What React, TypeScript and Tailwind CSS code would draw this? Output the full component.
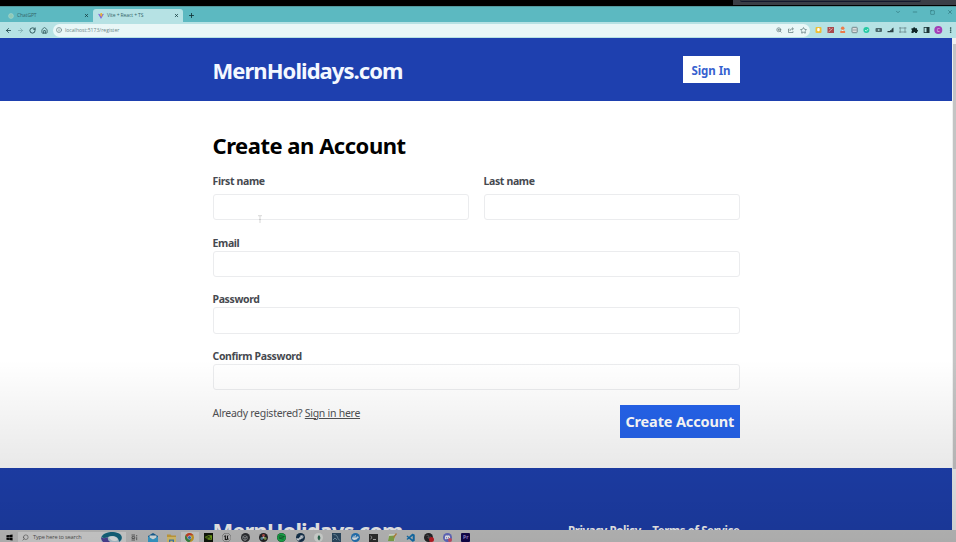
import type { ReactNode } from "react";
import { ArrowLeft, ArrowRight, RotateCw, House, Info, Plus, X, ZoomIn, Star, ChevronDown, Minus, Square, Search, EllipsisVertical } from "lucide-react";
import { FaWindows, FaSteamSymbol, FaSpotify, FaDocker, FaDiscord } from "react-icons/fa";
import { SiNvidia, SiUnrealengine, SiUnity, SiMongodb } from "react-icons/si";
import { VscVscode } from "react-icons/vsc";

function Tab({ icon, title, active }: { icon: ReactNode; title: string; active?: boolean }) {
  return (
    <div className={`flex h-[13px] items-center pr-[4px] ${active ? "w-[90px] rounded-t-[3px] bg-[#b6e2e4] pl-[5px]" : "w-[93px] pl-[8px]"}`}>
      {icon}
      <span className="ml-[3px] flex-1 text-[5px] leading-none tracking-[-0.1px] text-[#34666a]">{title}</span>
      <X size={5} strokeWidth={3.5} className="text-[#12383b]" />
    </div>
  );
}

function BrowserChrome() {
  return (
    <div className="shrink-0 font-['Open_Sans','Noto_Sans',sans-serif]">
      <div className="flex h-[16px] items-end border-t border-[#53989d] bg-[#5cb9c1]">
        <Tab
          title="ChatGPT"
          icon={
            <svg width="6" height="6" viewBox="0 0 6 6"><circle cx="3" cy="3" r="2.4" fill="#8fc9b4" stroke="#a4d6cd" strokeWidth=".7" /></svg>
          }
        />
        <Tab
          active
          title="Vite + React + TS"
          icon={
            <svg width="6" height="6" viewBox="0 0 6 6"><path d="M0 .8 3 6 6 .8 3 1.4Z" fill="#8468d8" /><path d="m2.5 0 1.8-.2-.5 1.7.9-.1L3 4.4l.1-1.700-1 .2Z" fill="#e9b338" /></svg>
          }
        />
        <Plus size={7} strokeWidth={3} className="mb-[3px] ml-[5px] text-[#12383b]" />
        <div className="mb-[7px] ml-auto flex items-center text-[#215c62]">
          <ChevronDown size={6} />
          <Minus size={6} className="ml-[11px]" />
          <Square size={5} className="ml-[12px]" />
          <X size={6} className="ml-[12px] mr-[3px]" />
        </div>
      </div>
      <div className="flex h-[16px] items-center bg-[#b6e2e4] pl-[5px] text-[#244c50]">
        <ArrowLeft size={7} strokeWidth={3} />
        <ArrowRight size={7} strokeWidth={2.5} className="ml-[5px] text-[#7ba8ab]" />
        <RotateCw size={7} strokeWidth={3} className="ml-[5px]" />
        <House size={7} strokeWidth={2.5} className="ml-[5px]" />
        <div className="ml-[5px] flex h-[13px] w-[757px] items-center rounded-full bg-[#e9f7f7] pl-[3px] pr-[3px]">
          <Info size={6} strokeWidth={2.5} className="text-[#5f7678]" />
          <span className="ml-[3px] pt-[1px] text-[5.1px] leading-none text-[#6c8688]">localhost:5173/register</span>
          <div className="ml-auto flex items-center gap-[6px] text-[#5b7476]">
            <ZoomIn size={6} strokeWidth={2.5} />
            <svg width="6" height="6" viewBox="0 0 6 6" fill="none" stroke="currentColor" strokeWidth=".7"><path d="M1.500 2H.5v3.500h4.500V4.300M2 4C2 2.500 3 1.800 5 1.800M4 .5l1.500 1.300L4 3.200" /></svg>
            <Star size={7} strokeWidth={2.5} />
          </div>
        </div>
        <svg className="ml-[4px]" width="141" height="12" viewBox="814 0 141 12">
          <rect x="815.5" y="3" width="6" height="6" rx="1" fill="#eebf36" /><rect x="817.2" y="4" width="2.5" height="3.2" rx="1" fill="#fff" />
          <rect x="827.5" y="3" width="6.500" height="6" fill="#a9494c" /><path d="m828.5 8 4-3.500M829 4l1.500 1" stroke="#f3d9d9" strokeWidth=".7" />
          <circle cx="842.7" cy="4.3" r="1.8" fill="#ed7b4a" /><path d="M840.3 9V6.800h4.800V9Z" fill="#ed7b4a" /><circle cx="842.7" cy="6.3" r=".6" fill="#fff" />
          <rect x="852" y="3.3" width="5.2" height="5.4" rx=".7" fill="#ddd" stroke="#73888d" /><path d="M853 6h3.500" stroke="#73888d" strokeWidth=".7" />
          <circle cx="866.4" cy="6" r="3" fill="#26c9a4" /><path d="m865 6 1.200 1.200 2-2.300" fill="none" stroke="#d4fff1" strokeWidth=".8" />
          <rect x="875.5" y="4" width="6.500" height="4" rx="1" fill="#4b686c" /><circle cx="878.7" cy="6" r="1" fill="#9fc9cc" />
          <path d="M887.500 8.300h6V3.500l-2 1.500v1.200h-1.500v.8h-2.500Z" fill="#283f43" />
          <path d="M900.200 3.200v5.600M905 3.200v5.600M899 4h7.500M899 8h7.500" fill="none" stroke="#638084" strokeWidth=".7" />
          <path d="M911.500 4.200h1.700a1 1 0 0 1 2 0h1.800v1.600a1 1 0 0 1 0 2V9h-1.800a.9.900 0 0 0-1.800 0h-1.900V7.400a.9.900 0 0 0 0-1.600Z" fill="#102629" />
          <rect x="924.1" y="3.4" width="4.8" height="5.2" fill="none" stroke="#1c3437" strokeWidth=".8" /><path d="M926.500 3h2.800v6h-2.800Z" fill="#1c3437" />
          <circle cx="938.3" cy="6" r="4" fill="#a23fb6" />
          <text x="938.3" y="7.800" textAnchor="middle" fontSize="5" fill="#f4dff6">C</text>
          <g transform="translate(947 2.600)"><EllipsisVertical size={7} strokeWidth={3} color="#24494c" /></g>
        </svg>
      </div>
    </div>
  );
}

function Field({ label, split }: { label: string; split?: boolean }) {
  return (
    <label className="flex flex-1 flex-col text-[10.5px] font-bold leading-[15px] tracking-[-0.36px] text-[#46494f]">
      <span className={split ? "mb-[5px]" : ""}>{label}</span>
      <input className="h-[26.5px] w-full rounded-[3px] border border-[#ebecee] bg-white/40 px-2 font-normal outline-none" />
    </label>
  );
}

function TaskIcon({ children }: { children: ReactNode }) {
  return <div className="flex h-[12px] w-[18.4px] shrink-0 items-center justify-center">{children}</div>;
}

function Taskbar() {
  return (
    <div className="flex h-[12px] shrink-0 items-center bg-[#c9c9c9] pt-[3px] font-['Open_Sans','Noto_Sans',sans-serif]">
      <div className="flex w-[18px] justify-center"><FaWindows size={7} color="#000" /></div>
      <div className="flex h-[12px] w-[107.500px] items-center bg-[#dfdfdf] pl-[4px]">
        <Search size={7} className="-scale-x-100 text-[#555]" />
        <span className="ml-[4px] pt-[1px] text-[5.6px] leading-none tracking-[-0.16px] text-[#555]">Type here to search</span>
        <svg className="ml-auto mr-[3px]" width="23" height="12" viewBox="0 0 23 12">
          <path d="M1 7C1 1 7 0 12 0c7 0 11 4 10 7-1 4-5 5-10 5C5 12 1 11 1 7Z" fill="#b9d3de" />
          <path d="M2 4C6-1 15-1 20 2c3 3 2 6-1 8 0-4-3-6-7-6-3 0-5 2-8 2-2 0-3-1-2-2Z" fill="#156a85" />
          <path d="M1 5c2 2 5 1 7 0-1 3 2 6 6 6-6 3-13 0-13-6Z" fill="#5046a0" />
          <path d="M9 5c4-2 8 0 9 3-3 2-8 1-9-3Z" fill="#f0f4f5" />
        </svg>
      </div>
      <TaskIcon><svg width="7" height="7" viewBox="0 0 7 7" fill="none" stroke="#4d4d4d" strokeWidth=".8"><path d="M.5 1h3.500M.5 6h3.500M1 2.700h2.700v1.800H1ZM5.700 1v1.400M5.700 3.200v3" /></svg></TaskIcon>
      <TaskIcon><svg width="10" height="9" viewBox="0 0 10 9"><path d="m0 3 5-3 5 3v6H0Z" fill="#18669e" /><path d="M1.500 2.500h7v3L5 7 1.500 5.500Z" fill="#e9f1f3" /><path d="M0 3.500 5 6.500l5-3V9H0Z" fill="#3ba7db" /></svg></TaskIcon>
      <TaskIcon><svg width="9" height="8" viewBox="0 0 9 8"><path d="M0 .5h3.500l1 1H9V8H0Z" fill="#d6aa42" /><path d="M0 3h9v5H0Z" fill="#ead077" /><path d="M2 8V5.500h5V8H5.700V6.700H3.300V8Z" fill="#4387b4" /></svg></TaskIcon>
      <div className="flex h-[12px] w-[18.400px] items-center justify-center bg-[#dcdcdc]">
        <svg width="9" height="9" viewBox="0 0 10 10"><circle cx="5" cy="5" r="5" fill="#d6a72b" /><path d="M.7 2.500A5 5 0 0 1 9.300 2.500H5L3 6Z" fill="#d44332" /><path d="M.7 2.500A5 5 0 0 0 5 10l2-3.500H3Z" fill="#368e4f" /><circle cx="5" cy="5" r="2.300" fill="#e9e9e9" /><circle cx="5" cy="5" r="1.700" fill="#3878c5" /></svg>
      </div>
      <TaskIcon><div className="flex size-[9px] items-center justify-center bg-[#10170b]"><SiNvidia size={7} color="#78ad1b" /></div></TaskIcon>
      <TaskIcon><SiUnrealengine size={9} color="#171717" /></TaskIcon>
      <TaskIcon><div className="flex size-[9px] items-center justify-center rounded-full bg-[#303236]"><SiUnity size={6} color="#8c8f92" /></div></TaskIcon>
      <TaskIcon><svg width="9" height="9" viewBox="0 0 9 9"><circle cx="4.500" cy="4.500" r="4.500" fill="#242427" /><circle cx="4.500" cy="2.500" r="1.400" fill="#b5524a" /><circle cx="2.800" cy="5.500" r="1.400" fill="#528ca0" /><circle cx="6.200" cy="5.500" r="1.400" fill="#83a04c" /><circle cx="4.500" cy="4.500" r="1" fill="#ddd" /></svg></TaskIcon>
      <TaskIcon><FaSpotify size={9} color="#1bb750" className="rounded-full bg-[#17502c]" /></TaskIcon>
      <TaskIcon><div className="flex size-[9px] items-center justify-center rounded-full bg-[#163450]"><FaSteamSymbol size={8} color="#e3e9ef" /></div></TaskIcon>
      <TaskIcon><div className="flex size-[9px] items-center justify-center rounded-full bg-[#e4e8e5]"><SiMongodb size={6} color="#26694f" /></div></TaskIcon>
      <TaskIcon><svg width="9" height="9" viewBox="0 0 9 9"><rect width="9" height="9" fill="#304f69" /><path d="M1.500 1.500c3 0 4 2 4.500 4l1.700 2M1 7l2-2 2 2" fill="none" stroke="#89a8bd" strokeWidth=".8" /></svg></TaskIcon>
      <TaskIcon><div className="flex size-[9px] items-center justify-center rounded-full bg-[#267bc2]"><FaDocker size={7} color="#edf6fc" /></div></TaskIcon>
      <TaskIcon><svg width="9" height="8" viewBox="0 0 9 8"><rect width="9" height="8" fill="#303030" /><path d="m1.500 2 1.600 1.500L1.500 5M4 5.500h3" fill="none" stroke="#d5d5d5" strokeWidth=".8" /></svg></TaskIcon>
      <TaskIcon><svg width="9" height="9" viewBox="0 0 9 9"><path d="M1 1h6v7H0Z" fill="#e6eddb" /><path d="m1 3 6-.5L6 8H0Z" fill="#8bb450" /><path d="M5 4 8 0l1 1-3 4Z" fill="#c68d40" /></svg></TaskIcon>
      <TaskIcon><VscVscode size={10} color="#1476b7" /></TaskIcon>
      <TaskIcon><svg width="10" height="9" viewBox="0 0 10 9"><circle cx="4.500" cy="4.500" r="4.500" fill="#272629" /><path d="M2.500 2.500c2-1 3 1 2 2.300M6.500 3.500c-.5 2-2 2-3 1" fill="none" stroke="#77757a" strokeWidth=".7" /><circle cx="7.500" cy="6.500" r="2.500" fill="#cc1e27" /></svg></TaskIcon>
      <TaskIcon><svg width="9" height="9" viewBox="0 0 9 9"><circle cx="4.500" cy="4.500" r="4.500" fill="#6971ce" /><g transform="translate(1.500 1.300)"><FaDiscord size={6} color="#fff" /></g><circle cx="7" cy="7" r="2" fill="#d45570" /></svg></TaskIcon>
      <TaskIcon><div className="flex size-[9px] items-center justify-center rounded-[1px] bg-[#12064f] text-[5px] font-bold leading-none text-[#9a90d9]">Pr</div></TaskIcon>
    </div>
  );
}

export default function App() {
  return (
    <div className="relative flex h-[542px] w-[956px] flex-col overflow-hidden bg-white font-['Noto_Sans','Open_Sans',sans-serif]">
      <div className="flex h-[6px] shrink-0 justify-end bg-black">
        <div className="h-[5px] w-[223px] bg-[#3b3e46]">
          <div className="ml-[7px] h-[2px] w-[181px] rounded-b-sm border-b border-[#14182c] bg-[#343841]" />
        </div>
      </div>
      <BrowserChrome />
      <div className="flex h-[492px] shrink-0">
        <div className="flex w-[952px] flex-col overflow-hidden">
          <header className="h-[63px] shrink-0 bg-[#1e40af] px-[212.500px]">
            <div className="flex h-[63px] items-center justify-between">
              <span className="pt-[1px] text-[22px] font-bold leading-none tracking-[-0.950px] text-[#f4f8ff]">MernHolidays.com</span>
              <button className="h-[27px] w-[57px] bg-white pt-[2px] text-[11.500px] font-bold leading-none tracking-[-0.050px] text-[#3661cf]">Sign In</button>
            </div>
          </header>
          <main className="h-[367px] shrink-0 px-[212.500px] pt-[30.500px]">
            <form className="flex flex-col">
              <h2 className="h-[42px] text-[22px] font-bold leading-[27px] tracking-[-0.480px] text-black">Create an Account</h2>
              <div className="flex gap-[15px]">
                <Field label="First name" split />
                <Field label="Last name" split />
              </div>
              <div className="mt-[15.500px] flex flex-col gap-[15px]">
                <Field label="Email" />
                <Field label="Password" />
                <Field label="Confirm Password" />
              </div>
              <div className="mt-[15px] flex items-start justify-between">
                <span className="pt-[0.500px] text-[10.500px] leading-[15px] tracking-[-0.270px] text-[#505154]">Already registered? <a className="underline">Sign in here</a></span>
                <button className="h-[33px] w-[119.500px] whitespace-nowrap bg-[#2563eb] text-[14.500px] font-bold leading-none tracking-[-0.150px] text-white">Create Account</button>
              </div>
            </form>
          </main>
          <footer className="h-[62px] shrink-0 overflow-hidden bg-[#1e40af] px-[212.500px] pt-[48px]">
            <div className="flex h-[30px] items-center justify-between text-white">
              <span className="pb-[2px] text-[22px] font-bold leading-none tracking-[-0.950px]">MernHolidays.com</span>
              <p className="flex gap-[11.500px] pb-[1px] text-[11.500px] font-bold leading-none tracking-[-0.400px]"><span>Privacy Policy</span><span>Terms of Service</span></p>
            </div>
          </footer>
        </div>
        <div className="flex w-[4px] flex-col items-center bg-[#f0f0f0] pt-[6px]">
          <div className="h-[425px] w-[3px] bg-[#c4c4c4]" />
        </div>
      </div>
      <Taskbar />
      <svg className="absolute left-[257px] top-[215px]" width="6" height="9" viewBox="0 0 6 9"><path d="M1 .7h4M3 1v7M2 4.500h2" fill="none" stroke="#c5c5c5" strokeWidth=".7" /></svg>
      <div className="pointer-events-none absolute inset-x-0 bottom-0 h-[182px] bg-linear-to-b from-transparent to-black/15" />
    </div>
  );
}
